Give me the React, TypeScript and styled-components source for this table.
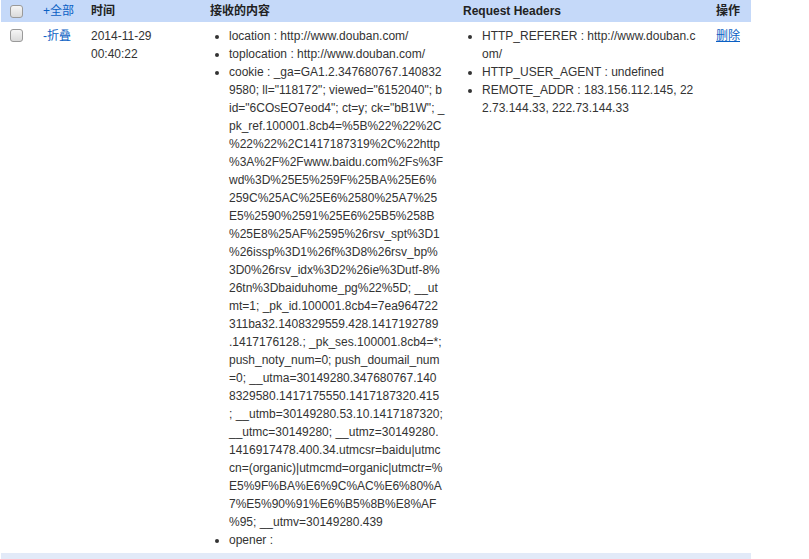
import React from "react";
import styled, { createGlobalStyle } from "styled-components";

const Global = createGlobalStyle`
  html, body { margin: 0; padding: 0; background: #fff; }
  body { font-family: "Liberation Sans", Arial, "Noto Sans CJK SC", sans-serif; font-size: 12px; color: #333; }
`;

const Table = styled.table`
  margin-left: 1px;
  width: 750px;
  border-collapse: collapse;
  table-layout: fixed;
  font-size: 12px;
  line-height: 18px;
`;

const HeadRow = styled.tr`
  background: #c5d9f9;
  height: 22px;
`;

const Th = styled.th<{ $w: number }>`
  width: ${(p) => p.$w - 14}px;
  text-align: left;
  font-weight: bold;
  color: #222;
  padding: 0 7px;
  vertical-align: middle;
  font-size: 12px;
  line-height: 18px;
  white-space: nowrap;
`;

const BoxHead = styled.th`
  width: 26px;
  padding: 0 0 0 9px;
  text-align: left;
  vertical-align: middle;
`;

const BoxCell = styled.td`
  padding: 7px 0 0 9px;
  vertical-align: top;
`;

const Check = styled.span`
  display: block;
  width: 11px;
  height: 11px;
  border: 1px solid #9a9a9a;
  border-radius: 3px;
  background: linear-gradient(#f6f6f6, #dadada);
  box-sizing: content-box;
`;

const Td = styled.td`
  padding: 5px 7px 4px;
  vertical-align: top;
  word-break: break-all;
`;

const Link = styled.a<{ $u?: boolean }>`
  color: #0a5fc4;
  text-decoration: ${(p) => (p.$u ? "underline" : "none")};
  cursor: pointer;
  font-weight: normal;
`;

const List = styled.ul`
  margin: 0;
  padding: 0 0 0 19px;
  list-style: disc;
`;

const Item = styled.li`
  line-height: 18px;
`;

const Line = styled.span`
  display: block;
  white-space: pre;
`;

const FootRow = styled.tr`
  background: #e2eaf8;
  height: 6px;
`;

const cookieLines = [
  "cookie : _ga=GA1.2.347680767.140832",
  '9580; ll="118172"; viewed="6152040"; b',
  'id="6COsEO7eod4"; ct=y; ck="bB1W"; _',
  "pk_ref.100001.8cb4=%5B%22%22%2C",
  "%22%22%2C1417187319%2C%22http",
  "%3A%2F%2Fwww.baidu.com%2Fs%3F",
  "wd%3D%25E5%259F%25BA%25E6%",
  "259C%25AC%25E6%2580%25A7%25",
  "E5%2590%2591%25E6%25B5%258B",
  "%25E8%25AF%2595%26rsv_spt%3D1",
  "%26issp%3D1%26f%3D8%26rsv_bp%",
  "3D0%26rsv_idx%3D2%26ie%3Dutf-8%",
  "26tn%3Dbaiduhome_pg%22%5D; __ut",
  "mt=1; _pk_id.100001.8cb4=7ea964722",
  "311ba32.1408329559.428.1417192789",
  ".1417176128.; _pk_ses.100001.8cb4=*;",
  "push_noty_num=0; push_doumail_num",
  "=0; __utma=30149280.347680767.140",
  "8329580.1417175550.1417187320.415",
  "; __utmb=30149280.53.10.1417187320;",
  "__utmc=30149280; __utmz=30149280.",
  "1416917478.400.34.utmcsr=baidu|utmc",
  "cn=(organic)|utmcmd=organic|utmctr=%",
  "E5%9F%BA%E6%9C%AC%E6%80%A",
  "7%E5%90%91%E6%B5%8B%E8%AF",
  "%95; __utmv=30149280.439",
];

export default function App() {
  return (
    <>
      <Global />
      <Table>
        <thead>
          <HeadRow>
            <BoxHead>
              <Check />
            </BoxHead>
            <Th $w={48}>
              <Link>+全部</Link>
            </Th>
            <Th $w={119}>时间</Th>
            <Th $w={253}>接收的内容</Th>
            <Th $w={253}>Request Headers</Th>
            <Th $w={42}>操作</Th>
          </HeadRow>
        </thead>
        <tbody>
          <tr>
            <BoxCell>
              <Check />
            </BoxCell>
            <Td>
              <Link>-折叠</Link>
            </Td>
            <Td>
              2014-11-29
              <br />
              00:40:22
            </Td>
            <Td>
              <List>
                <Item>location : http://www.douban.com/</Item>
                <Item>toplocation : http://www.douban.com/</Item>
                <Item>
                  {cookieLines.map((l, i) => (
                    <Line key={i}>{l}</Line>
                  ))}
                </Item>
                <Item>opener :</Item>
              </List>
            </Td>
            <Td>
              <List>
                <Item>HTTP_REFERER : http://www.douban.com/</Item>
                <Item>HTTP_USER_AGENT : undefined</Item>
                <Item>REMOTE_ADDR : 183.156.112.145, 222.73.144.33, 222.73.144.33</Item>
              </List>
            </Td>
            <Td>
              <Link $u>删除</Link>
            </Td>
          </tr>
          <FootRow>
            <td colSpan={6} />
          </FootRow>
        </tbody>
      </Table>
    </>
  );
}
